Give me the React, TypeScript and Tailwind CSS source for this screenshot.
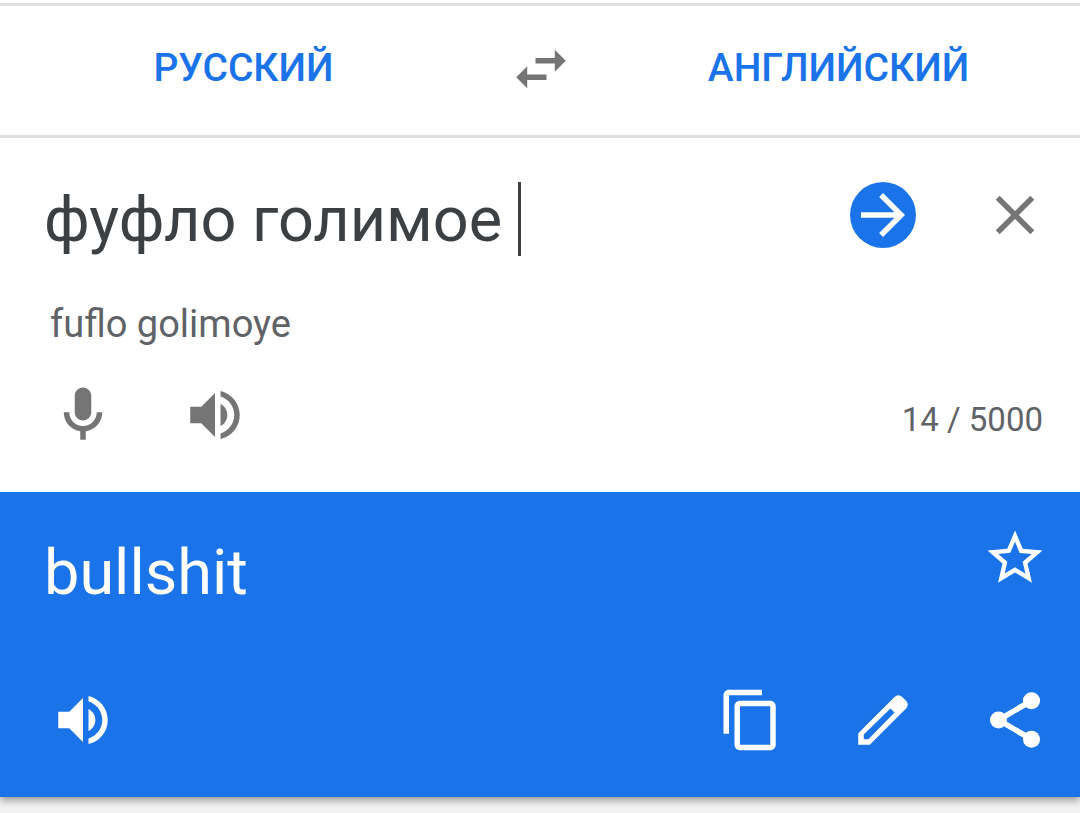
import { useState } from 'react'
import type { ReactNode } from 'react'

const MAX_LENGTH = 5000

function Icon({ children }: { children: ReactNode }) {
  return (
    <svg viewBox="0 0 24 24" className="block h-[66px] w-[66px]" fill="currentColor" aria-hidden="true">
      {children}
    </svg>
  )
}

function IconButton({ label, className, children, onClick }: {
  label: string
  className?: string
  children: ReactNode
  onClick?: () => void
}) {
  return (
    <button type="button" aria-label={label} onClick={onClick} className={`shrink-0 rounded-full ${className ?? ''}`}>
      <Icon>{children}</Icon>
    </button>
  )
}

const volumePath = (
  <path d="M3 9v6h4l5 5V4L7 9H3zm13.500 3c0-1.770-1.020-3.290-2.500-4.030v8.050c1.480-.730 2.500-2.250 2.500-4.020zM14 3.230v2.060c2.890.860 5 3.540 5 6.710s-2.110 5.850-5 6.710v2.060c4.010-.910 7-4.490 7-8.770s-2.990-7.860-7-8.770z" />
)

export default function App() {
  const [text, setText] = useState('фуфло голимое ')

  return (
    <div className="min-h-screen bg-[#f2f2f2] font-['Roboto',sans-serif]">
      <main className="bg-white shadow-[0_3px_8px_rgba(0,0,0,0.4)]">
        {/* Languages */}
        <div className="pt-[3px]">
          <nav className="flex items-start border-y-[3px] border-[#e0e0e0] pt-[30px] pb-[33px] pl-[2px] text-[#1a73e8]">
            <button type="button" className="flex-1 text-[39px] leading-[64px] font-medium">РУССКИЙ</button>
            <div className="flex w-28 justify-center">
              <IconButton label="Поменять языки местами" className="text-[#757575]">
                <path d="M6.990 11L3 15l3.990 4v-3H14v-2H6.990v-3zM21 9l-3.990-4v3H10v2h7.010v3L21 9z" />
              </IconButton>
            </div>
            <button type="button" className="flex-1 text-[39px] leading-[64px] font-medium">АНГЛИЙСКИЙ</button>
          </nav>
        </div>

        {/* Source text */}
        <section className="pt-11 pr-8 pb-11 pl-[50px]">
          <div className="-ml-[6px] flex items-start justify-between">
            <div className="flex items-center">
              <input
                type="text"
                aria-label="Исходный текст"
                value={text}
                maxLength={MAX_LENGTH}
                onChange={(e) => setText(e.target.value)}
                className="field-sizing-content h-[74px] text-[63px] leading-[72px] text-[#3c4043] caret-transparent outline-none"
              />
              <span className="h-[74px] w-[3px] bg-[#3c4043]" />
            </div>
            <div className="flex gap-[66px]">
              <IconButton label="Перевести" className="bg-[#1a73e8] text-white">
                <path d="M12 4l-1.410 1.410L16.170 11H4v2h12.170l-5.580 5.590L12 20l8-8z" />
              </IconButton>
              <IconButton label="Очистить" className="text-[#757575]" onClick={() => setText('')}>
                <path d="M19 6.410L17.590 5 12 10.590 6.410 5 5 6.410 10.590 12 5 17.590 6.410 19 12 13.410 17.590 19 19 17.590 13.410 12z" />
              </IconButton>
            </div>
          </div>

          <p className="mt-11 text-[38px] leading-[48px] text-[#5f6368]">fuflo golimoye</p>

          <div className="mt-[34px] flex items-center justify-between">
            <div className="flex gap-[66px] text-[#757575]">
              <IconButton label="Голосовой ввод">
                <path d="M12 14c1.660 0 3-1.340 3-3V5c0-1.660-1.340-3-3-3S9 3.340 9 5v6c0 1.660 1.340 3 3 3zm5-3c0 2.760-2.240 5-5 5s-5-2.240-5-5H5c0 3.530 2.610 6.430 6 6.920V21h2v-3.080c3.390-.490 6-3.390 6-6.920h-2z" />
              </IconButton>
              <IconButton label="Прослушать">{volumePath}</IconButton>
            </div>
            <p className="pt-[10px] pr-[5px] text-[33px] leading-[40px] text-[#5f6368]">
              {text.length} / {MAX_LENGTH}
            </p>
          </div>
        </section>

        {/* Translation */}
        <section className="bg-[#1a73e8] pt-[33px] pr-8 pb-11 pl-[50px] text-white">
          <div className="-ml-[6px] flex items-start justify-between">
            <p className="pt-3 text-[63px] leading-[72px]">bullshit</p>
            <IconButton label="Сохранить перевод">
              <path d="M22 9.240l-7.190-.620L12 2 9.190 8.630 2 9.240l5.460 4.730L5.820 21 12 17.270 18.180 21l-1.630-7.030L22 9.240zM12 15.400l-3.760 2.270 1-4.280-3.320-2.880 4.380-.380L12 6.100l1.710 4.040 4.380.380-3.320 2.880 1 4.280L12 15.400z" />
            </IconButton>
          </div>

          <div className="mt-[78px] flex justify-between">
            <IconButton label="Прослушать перевод">{volumePath}</IconButton>
            <div className="flex gap-[66px]">
              <IconButton label="Копировать">
                <path d="M16 1H4c-1.100 0-2 .900-2 2v14h2V3h12V1zm3 4H8c-1.100 0-2 .900-2 2v14c0 1.100.900 2 2 2h11c1.100 0 2-.900 2-2V7c0-1.100-.900-2-2-2zm0 16H8V7h11v14z" />
              </IconButton>
              <IconButton label="Предложить исправление">
                <path fillRule="evenodd" d="M3 16.800L16.200 3.600Q17.600 2.400 19 3.600L20.400 5Q21.600 6.400 20.400 7.800L7.200 21H3zM14.700 7.800L5 17.300V19H6.700L16.200 9.300z" />
              </IconButton>
              <IconButton label="Поделиться">
                <circle cx="18" cy="5" r="3.100" />
                <circle cx="6" cy="12" r="3.100" />
                <circle cx="18" cy="19" r="3.100" />
                <path d="M18 5L6 12l12 7" fill="none" stroke="currentColor" strokeWidth="2" />
              </IconButton>
            </div>
          </div>
        </section>
      </main>
    </div>
  )
}
